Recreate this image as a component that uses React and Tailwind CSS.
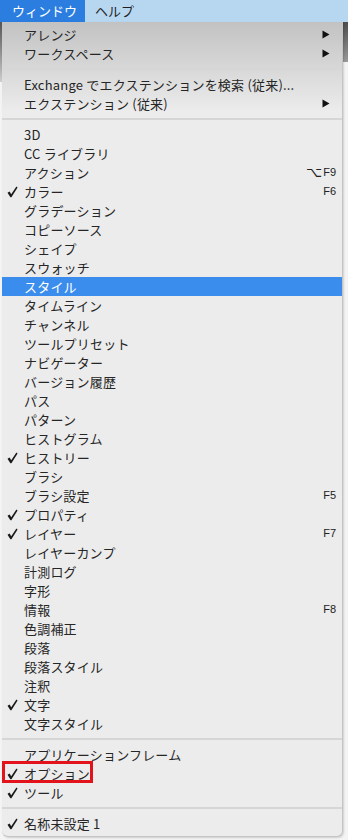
import React from "react";

const Check = () => (
  <svg width="11" height="12" viewBox="0 0 11 12">
    <path d="M0.5 6.8 L2.6 5.4 L4.2 8.2 L9.4 0.6 L10.6 1.4 L4.4 11.2 L3.4 11.2 Z" fill="#1a1a1a" />
  </svg>
);

const Arrow = () => (
  <svg width="8" height="9" viewBox="0 0 8 9">
    <path d="M0.5 0.5 L7.5 4.5 L0.5 8.5 Z" fill="#111" />
  </svg>
);

const Row = ({ label, check, arrow, sc, alt, hl, box }) => (
  <div
    className={
      "relative h-[19px] flex items-center text-[13px] leading-[19px] " +
      (hl ? "bg-[#3b8ded] text-white" : "text-[#262626]")
    }
  >
    <div className="w-[22px] h-[19px] flex items-center justify-start pl-[5px] pt-[1px]">
      {check && <Check />}
    </div>
    <span className="whitespace-nowrap tracking-[0.2px]">{label}</span>
    {arrow && (
      <div className="ml-auto pr-[12px] flex items-center">
        <Arrow />
      </div>
    )}
    {sc && (
      <div className="ml-auto pr-[6px] flex items-center text-[11px] text-[#222] font-['Liberation_Sans',sans-serif]">
        {alt && <span className="mr-[1px] text-[14px] leading-[19px] font-['DejaVu_Sans',sans-serif]">⌥</span>}
        <span>{sc}</span>
      </div>
    )}
    {box && (
      <div className="absolute left-0 top-[-3px] w-[91px] h-[22px] border-[3px] border-[#e3131b]" />
    )}
  </div>
);

const Sep = () => (
  <div className="h-[12px] flex items-center">
    <div className="h-[2px] w-full bg-[#d6d6d6]" />
  </div>
);

export default function App() {
  const mid = [
    { label: "3D" },
    { label: "CC ライブラリ" },
    { label: "アクション", sc: "F9", alt: true },
    { label: "カラー", check: true, sc: "F6" },
    { label: "グラデーション" },
    { label: "コピーソース" },
    { label: "シェイプ" },
    { label: "スウォッチ" },
    { label: "スタイル", hl: true },
    { label: "タイムライン" },
    { label: "チャンネル" },
    { label: "ツールプリセット" },
    { label: "ナビゲーター" },
    { label: "バージョン履歴" },
    { label: "パス" },
    { label: "パターン" },
    { label: "ヒストグラム" },
    { label: "ヒストリー", check: true },
    { label: "ブラシ" },
    { label: "ブラシ設定", sc: "F5" },
    { label: "プロパティ", check: true },
    { label: "レイヤー", check: true, sc: "F7" },
    { label: "レイヤーカンプ" },
    { label: "計測ログ" },
    { label: "字形" },
    { label: "情報", sc: "F8" },
    { label: "色調補正" },
    { label: "段落" },
    { label: "段落スタイル" },
    { label: "注釈" },
    { label: "文字", check: true },
    { label: "文字スタイル" },
  ];
  return (
    <div className="w-[348px] h-[840px] bg-[#f4f4f4] overflow-hidden flex flex-col font-['Noto_Sans_CJK_JP',sans-serif]">
      <div className="h-[22px] shrink-0 bg-[#b7d7f0] flex items-center text-[13px]">
        <div className="h-[22px] w-[85px] bg-[#2b7de0] text-white flex items-center pl-[12px]">ウィンドウ</div>
        <div className="pl-[10px] text-[#1e1e1e]">ヘルプ</div>
      </div>
      <div className="flex items-start">
        <div className="w-[2px] h-[60px] bg-gradient-to-b from-[#555] to-[#cfcfcf]" />
        <div className="relative w-[341px] h-[815px] bg-[#ececec] rounded-b-[6px] border-r border-b border-[#c4c4c4] shadow-[1px_1px_2px_rgba(0,0,0,0.15)] bg-[linear-gradient(to_bottom,#c2c2c2_0px,#ececec_90px,#ececec_100%)]">
          <div className="pt-[3px] flex flex-col">
            <Row label="アレンジ" arrow />
            <Row label="ワークスペース" arrow />
            <Sep />
            <Row label="Exchange でエクステンションを検索 (従来)..." />
            <Row label="エクステンション (従来)" arrow />
            <Sep />
            {mid.map((r, i) => (
              <Row key={i} {...r} />
            ))}
            <Sep />
            <Row label="アプリケーションフレーム" />
            <Row label="オプション" check box />
            <Row label="ツール" check />
            <Sep />
            <Row label="名称未設定 1" check />
          </div>
        </div>
        <div className="w-[5px] h-[40px] bg-gradient-to-b from-[#4d4d4d] to-[#9a9a9a]" />
      </div>
    </div>
  );
}
